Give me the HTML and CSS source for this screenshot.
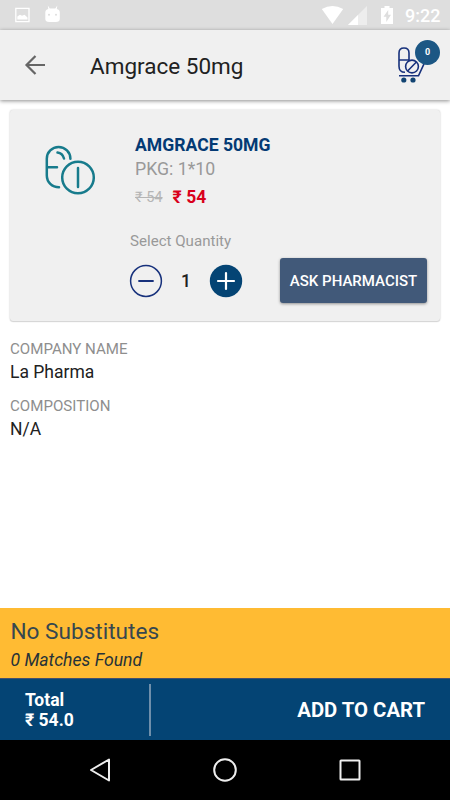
FILE: index.html
```html
<!DOCTYPE html>
<html lang="en">
<head>
<meta charset="utf-8">
<title>Amgrace 50mg</title>
<link rel="stylesheet" href="styles.css">
</head>
<body>
<div class="status">
  <svg class="status-left" width="60" height="30" viewBox="0 0 60 30">
    <path d="M15.800 8.300h13.200v13.400h-13.200z" fill="none" stroke="#fff" stroke-width="1.300"/>
    <path d="M17.300 19.500v-3l2.700-1.700 2 1 2.500-1 3 2.700v2z" fill="#fff"/>
    <path d="M45.300 12.500q0-3 3-3.500l-.5-3.500 2 3h5.500l2-3-.5 3.500q3 .5 3 3.500v6.500q0 3-4 3h-6.500q-4 0-4-3z" fill="#fff"/>
    <circle cx="49" cy="14.800" r="1" fill="#dedede"/><circle cx="56" cy="14.800" r="1" fill="#dedede"/>
  </svg>
  <svg class="status-right" width="76" height="30" viewBox="320 0 76 30">
    <path d="M321.800 9q10.700-6 21.400 0L332.500 24z" fill="#fff"/>
    <path d="M367 6v19h-19z" fill="#ededed"/><path d="M358 15v10h-10z" fill="#fff"/>
    <path d="M381 8h3.500V6h5v2h3.500v16h-12z" fill="#fff"/>
    <path d="M388.200 10l-4.700 6.700h2.800V22l4.700-7.200h-2.800z" fill="#dedede"/>
  </svg>
  <span class="clock">9:22</span>
</div>
<header class="appbar">
  <svg class="back" width="22" height="22" viewBox="24 54 22 22"><path d="M45 65H27M35.500 56L26.500 65l9 9" fill="none" stroke="#666" stroke-width="2.200"/></svg>
  <h1>Amgrace 50mg</h1>
  <div class="cart">
    <svg width="32" height="40" viewBox="396 45 32 40" fill="none" stroke="#17317c" stroke-width="1.600">
      <path d="M405 72.300q-6 0-6-6V53q0-5 5-5t5 5v8M399 60h10"/>
      <circle cx="412" cy="66.500" r="6.400"/><path d="M407.600 71l8.800-9M399 75.800h19.500l5.500-12"/>
      <circle cx="403.800" cy="80" r="2.600" fill="#124472" stroke="none"/><circle cx="413" cy="80" r="2.600" fill="#124472" stroke="none"/>
    </svg>
    <span class="badge">0</span>
  </div>
</header>
<main>
  <section class="card">
    <svg class="pills" width="52" height="52" viewBox="44 144 52 52" fill="none" stroke="#177b8c" stroke-width="2.500" stroke-linecap="round">
      <path d="M59 187.300c-7 0-12.200-5-12.200-12v-16.500a11.800 11.800 0 0 1 23.600 0M47 167.300h10M57.500 152.500q5 .5 6.500 6M78 168v19"/>
      <circle cx="78" cy="177.500" r="15.800"/>
    </svg>
    <div class="info">
      <h2>AMGRACE 50MG</h2>
      <p class="pkg">PKG: 1*10</p>
      <p class="prices"><s>₹ 54</s><strong>₹ 54</strong></p>
      <p class="select">Select Quantity</p>
      <div class="actions">
        <svg width="34" height="34" viewBox="0 0 34 34"><circle cx="17" cy="17" r="15.400" fill="none" stroke="#17317c" stroke-width="1.500"/><path d="M10 17h14" stroke="#17317c" stroke-width="1.800" stroke-linecap="round"/></svg>
        <span class="count">1</span>
        <svg width="34" height="34" viewBox="0 0 34 34"><circle cx="17" cy="17" r="16.200" fill="#044474"/><path d="M9 17h16M17 9v16" stroke="#fff" stroke-width="2.200" stroke-linecap="round"/></svg>
        <button class="ask">ASK PHARMACIST</button>
      </div>
    </div>
  </section>
  <dl>
    <dt>COMPANY NAME</dt><dd>La Pharma</dd>
    <dt>COMPOSITION</dt><dd>N/A</dd>
  </dl>
</main>
<section class="subs">
  <h3>No Substitutes</h3>
  <p>0 Matches Found</p>
</section>
<footer class="buy">
  <div class="total">Total<br>₹ 54.0</div>
  <div class="add">ADD TO CART</div>
</footer>
<nav>
  <svg width="450" height="60" viewBox="0 0 450 60" fill="none" stroke="#eee" stroke-width="2" stroke-linejoin="round">
    <path d="M109 19.500v21L91 30z"/><circle cx="225" cy="30" r="10.800"/><rect x="340.500" y="20.500" width="19" height="19" rx=".5"/>
  </svg>
</nav>
</body>
</html>
```
FILE: styles.css
```css
* { box-sizing: border-box; margin: 0; padding: 0; }
body {
  width: 450px; height: 800px; overflow: hidden;
  display: flex; flex-direction: column;
  background: #fff; color: #212121;
  font-family: Roboto, "Noto Sans", sans-serif;
  white-space: nowrap;
}
svg { display: block; flex: none; }
.status { flex: none; height: 30px; display: flex; background: #dedede; }
.status-right { margin-left: auto; }
.clock { width: 54px; padding-left: 9px; font-size: 18px; font-weight: 500; line-height: 32px; color: #fff; }
.appbar {
  flex: 0 0 70px; display: flex; align-items: center; z-index: 1;
  background: #f0f0f0; box-shadow: 0 1px 4px rgba(0, 0, 0, .45);
}
.back { margin-left: 24px; }
h1 { margin-left: 44px; font-size: 22.500px; font-weight: 400; line-height: 30px; padding-top: 2px; }
.cart { position: relative; margin: 0 22px 0 auto; }
.badge {
  position: absolute; left: 19px; top: -5px; width: 25px; height: 25px; border-radius: 50%;
  background: #1c5784; color: #fff; font-size: 9px; font-weight: 700; line-height: 25px; text-align: center;
}
main { flex: 1; padding: 10px 10px 0; }
.card {
  display: flex; height: 211px; padding: 0 13px 0 34px;
  background: #f0f0f0; border-radius: 3px;
  box-shadow: 0 0 2px rgba(0, 0, 0, .22), 0 1px 1px rgba(0, 0, 0, .12);
}
.pills { margin-top: 34px; }
.info { flex: 1; padding: 23px 0 0 39px; }
h2 { font-size: 17.600px; font-weight: 700; line-height: 24px; color: #043a74; }
.pkg { font-size: 17.700px; line-height: 24px; color: #999; }
.prices { display: flex; gap: 10px; line-height: 32px; }
.prices s { font-size: 14.600px; color: #b5b5b5; }
.prices strong { font-size: 17.500px; color: #d9001b; }
.select { margin: 18px 0 0 -5px; font-size: 15.100px; line-height: 20px; color: #999; }
.actions { display: flex; align-items: center; margin: 7px 0 0 -6px; }
.count { width: 46px; text-align: center; font-size: 17.500px; font-weight: 500; }
.ask {
  width: 147px; height: 45px; margin-left: auto; border: 0; border-radius: 3px;
  background: #415979; color: #fff; font: 500 15px Roboto, sans-serif;
  box-shadow: 0 1px 3px rgba(0, 0, 0, .4);
}
dl { padding-top: 18px; }
dt { font-size: 15.100px; line-height: 20px; color: #8e8e8e; }
dd { margin-bottom: 11px; padding-top: 1px; font-size: 17.500px; line-height: 25px; }
.subs { flex: 0 0 70px; padding: 9px 10.500px 0; background: #ffbb33; color: #37474f; }
h3 { font-size: 22.600px; font-weight: 400; line-height: 30px; }
.subs p { font-size: 17.600px; font-style: italic; line-height: 27px; color: #263238; }
.buy { flex: 0 0 62px; display: flex; align-items: center; background: #044474; color: #fff; font-weight: 700; border-top: 1px solid #45506c; }
.total { width: 151px; height: 52px; padding: 6px 0 0 25px; border-right: 2px solid #6f8fab; font-size: 17.500px; line-height: 20.500px; }
.add { margin-left: auto; padding-right: 25px; font-size: 20.300px; }
nav { flex: 0 0 60px; background: #000; }
```
